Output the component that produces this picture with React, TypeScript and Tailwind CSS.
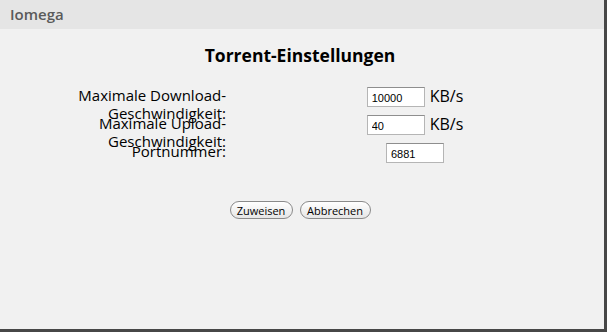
import React from 'react'

const rows = [
  { label: 'Maximale Download-Geschwindigkeit:', value: '10000', unit: 'KB/s' },
  { label: 'Maximale Upload-Geschwindigkeit:', value: '40', unit: 'KB/s' },
  { label: 'Portnummer:', value: '6881', unit: '' },
]

const App = () => {
  return (
    <div className="w-[607px] h-[332px] bg-[#f1f1f1] border-r-[3px] border-b-[3px] border-[#474747] font-['Open_Sans',sans-serif] text-black overflow-hidden">
      <div className="h-[29px] bg-[#e5e5e5] pl-[10px] flex items-center text-[#5a5a5a] font-semibold text-[15px]">Iomega</div>
      <h1 className="mt-[14px] text-center font-bold text-[17.5px] leading-[24px] pr-[4px]">Torrent-Einstellungen</h1>
      <div className="mt-[19px] grid grid-cols-[226px_1fr]">
        {rows.map((r) => (
          <React.Fragment key={r.label}>
            <div className="h-[28px] text-right text-[15px] leading-[18px]">{r.label}</div>
            <div className="h-[28px] flex justify-center items-start pt-[1px]">
              <input
                readOnly
                value={r.value}
                className="w-[58px] h-[20px] bg-white border border-[#b5b5b5] border-t-[#8e8e8e] px-[4px] pt-[2px] text-[11px] font-['Liberation_Sans',sans-serif] outline-none"
              />
              {r.unit && <span className="ml-[5px] text-[16px] leading-[18px]">{r.unit}</span>}
            </div>
          </React.Fragment>
        ))}
      </div>
      <div className="mt-[31px] flex justify-center gap-[7px] pr-[4px]">
        <button className="w-[63px] h-[18px] rounded-full border border-[#8a8a8a] bg-gradient-to-b from-white to-[#e6e6e6] text-[11px] leading-none">Zuweisen</button>
        <button className="w-[71px] h-[18px] rounded-full border border-[#8a8a8a] bg-gradient-to-b from-white to-[#e6e6e6] text-[11px] leading-none">Abbrechen</button>
      </div>
    </div>
  )
}

export default App
